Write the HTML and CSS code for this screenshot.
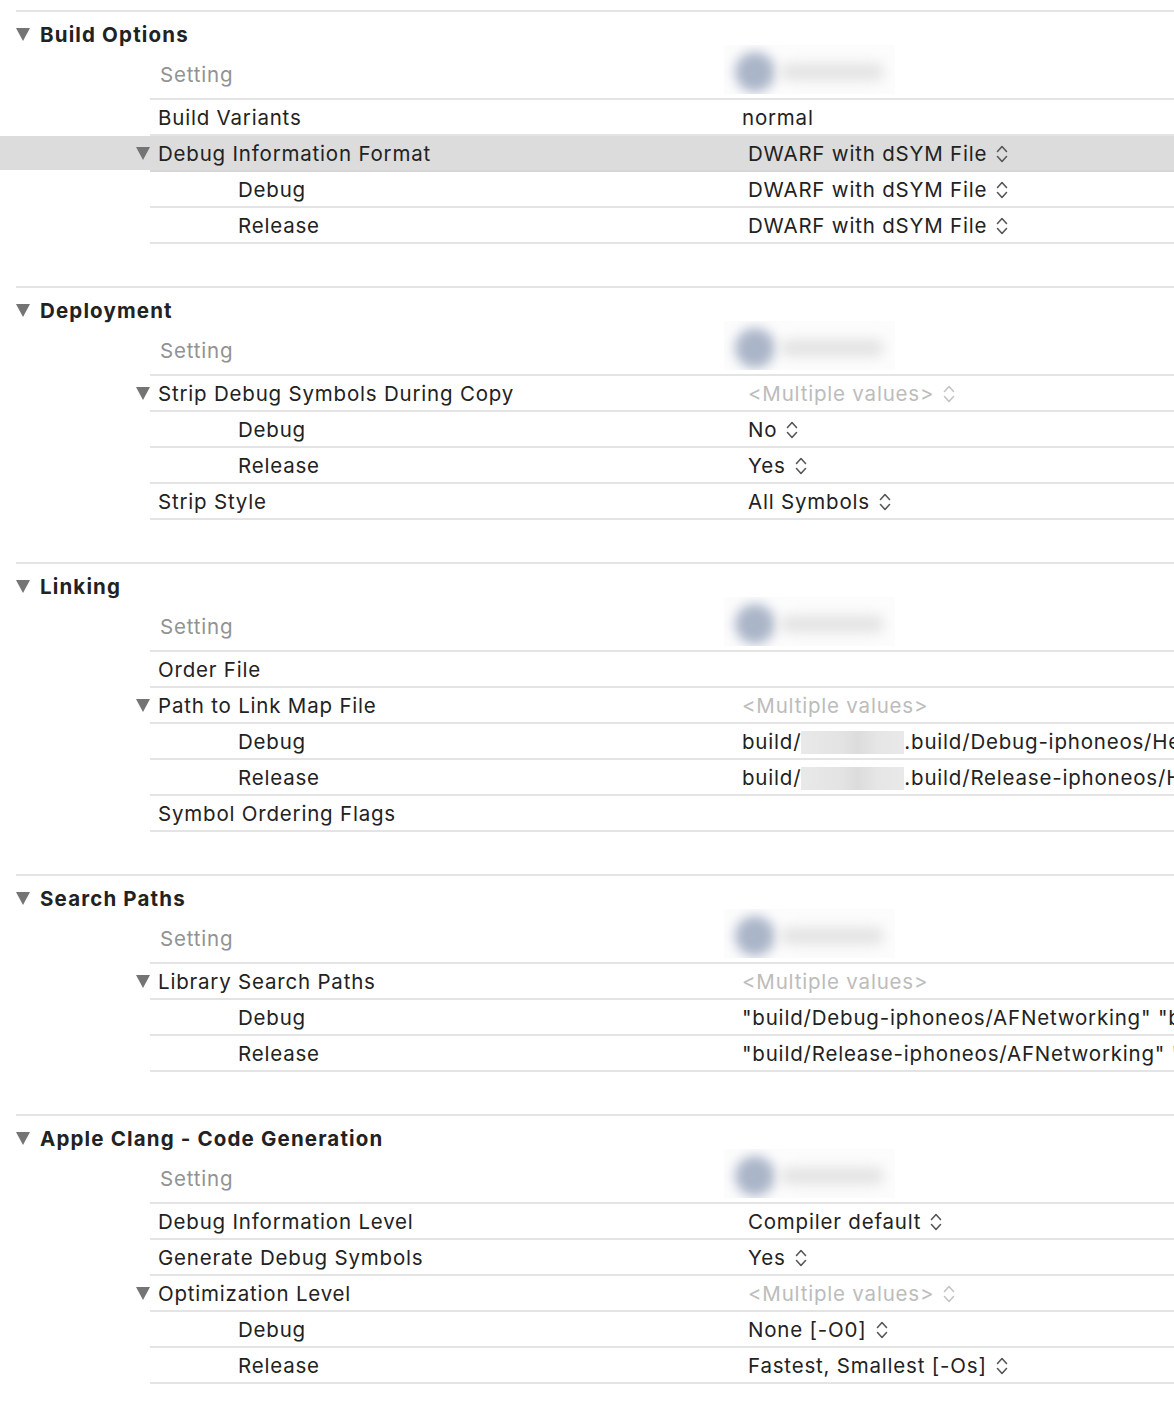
FILE: index.html
```html
<!DOCTYPE html>
<html>
<head>
<meta charset="utf-8">
<link rel="stylesheet" href="styles.css">
</head>
<body>
<div class="editor">

  <section class="group">
    <div class="group-head"><span class="disc"></span><span>Build Options</span></div>
    <div class="colhead"><span class="gutter"></span><span class="name">Setting</span><span class="val"><span class="avatar"><span class="blob-c"></span><span class="blob-b"></span></span></span></div>
    <div class="row"><span class="gutter"></span><span class="name">Build Variants</span><span class="val">normal</span></div>
    <div class="row selected"><span class="gutter"><span class="disc"></span></span><span class="name">Debug Information Format</span><span class="val popup">DWARF with dSYM File<svg class="stepper" viewBox="0 0 12 20"><path d="M1.5 7.5 L6 2.5 L10.5 7.5 M1.5 12.5 L6 17.5 L10.5 12.5"/></svg></span></div>
    <div class="row"><span class="gutter"></span><span class="name sub">Debug</span><span class="val popup">DWARF with dSYM File<svg class="stepper" viewBox="0 0 12 20"><path d="M1.5 7.5 L6 2.5 L10.5 7.5 M1.5 12.5 L6 17.5 L10.5 12.5"/></svg></span></div>
    <div class="row"><span class="gutter"></span><span class="name sub">Release</span><span class="val popup">DWARF with dSYM File<svg class="stepper" viewBox="0 0 12 20"><path d="M1.5 7.5 L6 2.5 L10.5 7.5 M1.5 12.5 L6 17.5 L10.5 12.5"/></svg></span></div>
  </section>

  <section class="group">
    <div class="group-head"><span class="disc"></span><span>Deployment</span></div>
    <div class="colhead"><span class="gutter"></span><span class="name">Setting</span><span class="val"><span class="avatar"><span class="blob-c"></span><span class="blob-b"></span></span></span></div>
    <div class="row"><span class="gutter"><span class="disc"></span></span><span class="name">Strip Debug Symbols During Copy</span><span class="val popup multi">&lt;Multiple values&gt;<svg class="stepper" viewBox="0 0 12 20"><path d="M1.5 7.5 L6 2.5 L10.5 7.5 M1.5 12.5 L6 17.5 L10.5 12.5"/></svg></span></div>
    <div class="row"><span class="gutter"></span><span class="name sub">Debug</span><span class="val popup">No<svg class="stepper" viewBox="0 0 12 20"><path d="M1.5 7.5 L6 2.5 L10.5 7.5 M1.5 12.5 L6 17.5 L10.5 12.5"/></svg></span></div>
    <div class="row"><span class="gutter"></span><span class="name sub">Release</span><span class="val popup">Yes<svg class="stepper" viewBox="0 0 12 20"><path d="M1.5 7.5 L6 2.5 L10.5 7.5 M1.5 12.5 L6 17.5 L10.5 12.5"/></svg></span></div>
    <div class="row"><span class="gutter"></span><span class="name">Strip Style</span><span class="val popup">All Symbols<svg class="stepper" viewBox="0 0 12 20"><path d="M1.5 7.5 L6 2.5 L10.5 7.5 M1.5 12.5 L6 17.5 L10.5 12.5"/></svg></span></div>
  </section>

  <section class="group">
    <div class="group-head"><span class="disc"></span><span>Linking</span></div>
    <div class="colhead"><span class="gutter"></span><span class="name">Setting</span><span class="val"><span class="avatar"><span class="blob-c"></span><span class="blob-b"></span></span></span></div>
    <div class="row"><span class="gutter"></span><span class="name">Order File</span><span class="val"></span></div>
    <div class="row"><span class="gutter"><span class="disc"></span></span><span class="name">Path to Link Map File</span><span class="val multi">&lt;Multiple values&gt;</span></div>
    <div class="row"><span class="gutter"></span><span class="name sub">Debug</span><span class="val">build/<span class="redact"></span>.build/Debug-iphoneos/HelloWorld-LinkMap.txt</span></div>
    <div class="row"><span class="gutter"></span><span class="name sub">Release</span><span class="val">build/<span class="redact"></span>.build/Release-iphoneos/HelloWorld-LinkMap.txt</span></div>
    <div class="row"><span class="gutter"></span><span class="name">Symbol Ordering Flags</span><span class="val"></span></div>
  </section>

  <section class="group">
    <div class="group-head"><span class="disc"></span><span>Search Paths</span></div>
    <div class="colhead"><span class="gutter"></span><span class="name">Setting</span><span class="val"><span class="avatar"><span class="blob-c"></span><span class="blob-b"></span></span></span></div>
    <div class="row"><span class="gutter"><span class="disc"></span></span><span class="name">Library Search Paths</span><span class="val multi">&lt;Multiple values&gt;</span></div>
    <div class="row"><span class="gutter"></span><span class="name sub">Debug</span><span class="val">"build/Debug-iphoneos/AFNetworking" "build/Debug-iphoneos/Masonry"</span></div>
    <div class="row"><span class="gutter"></span><span class="name sub">Release</span><span class="val">"build/Release-iphoneos/AFNetworking"  "build/Release-iphoneos/Masonry"</span></div>
  </section>

  <section class="group">
    <div class="group-head"><span class="disc"></span><span>Apple Clang - Code Generation</span></div>
    <div class="colhead"><span class="gutter"></span><span class="name">Setting</span><span class="val"><span class="avatar"><span class="blob-c"></span><span class="blob-b"></span></span></span></div>
    <div class="row"><span class="gutter"></span><span class="name">Debug Information Level</span><span class="val popup">Compiler default<svg class="stepper" viewBox="0 0 12 20"><path d="M1.5 7.5 L6 2.5 L10.5 7.5 M1.5 12.5 L6 17.5 L10.5 12.5"/></svg></span></div>
    <div class="row"><span class="gutter"></span><span class="name">Generate Debug Symbols</span><span class="val popup">Yes<svg class="stepper" viewBox="0 0 12 20"><path d="M1.5 7.5 L6 2.5 L10.5 7.5 M1.5 12.5 L6 17.5 L10.5 12.5"/></svg></span></div>
    <div class="row"><span class="gutter"><span class="disc"></span></span><span class="name">Optimization Level</span><span class="val popup multi">&lt;Multiple values&gt;<svg class="stepper" viewBox="0 0 12 20"><path d="M1.5 7.5 L6 2.5 L10.5 7.5 M1.5 12.5 L6 17.5 L10.5 12.5"/></svg></span></div>
    <div class="row"><span class="gutter"></span><span class="name sub">Debug</span><span class="val popup">None [-O0]<svg class="stepper" viewBox="0 0 12 20"><path d="M1.5 7.5 L6 2.5 L10.5 7.5 M1.5 12.5 L6 17.5 L10.5 12.5"/></svg></span></div>
    <div class="row"><span class="gutter"></span><span class="name sub">Release</span><span class="val popup">Fastest, Smallest [-Os]<svg class="stepper" viewBox="0 0 12 20"><path d="M1.5 7.5 L6 2.5 L10.5 7.5 M1.5 12.5 L6 17.5 L10.5 12.5"/></svg></span></div>
  </section>

</div>
</body>
</html>
```

FILE: styles.css
```css
html, body {
  margin: 0;
  padding: 0;
  background: #ffffff;
}

body {
  font-family: Inter, "Liberation Sans", sans-serif;
  font-size: 20.5px;
  letter-spacing: 0.8px;
  color: #222222;
  overflow: hidden;
}

.editor {
  padding-top: 10px;
  width: 1174px;
}

.group {
  margin-bottom: 42px;
}

.group-head {
  margin-left: 16px;
  border-top: 2px solid #e4e4e4;
  height: 44px;
  display: flex;
  align-items: center;
  gap: 10px;
  font-weight: 700;
  letter-spacing: 1.15px;
  color: #222222;
}

.disc {
  display: inline-block;
  width: 0;
  height: 0;
  border-left: 7px solid transparent;
  border-right: 7px solid transparent;
  border-top: 13px solid #747474;
}

.colhead,
.row {
  display: grid;
  grid-template-columns: 150px 592px 1fr;
}

.gutter {
  display: flex;
  align-items: center;
  justify-content: flex-end;
}

.colhead .name,
.colhead .val {
  height: 35px;
  line-height: 36px;
  padding-top: 1px;
  padding-bottom: 6px;
  border-bottom: 2px solid #e4e4e4;
}

.colhead .name {
  padding-left: 10px;
  color: #929292;
}

.colhead .val {
  position: relative;
}

.avatar {
  position: absolute;
  left: -18px;
  top: -11px;
  width: 171px;
  height: 49px;
  background: #fcfcfd;
  overflow: hidden;
}

.blob-c {
  position: absolute;
  left: 11px;
  top: 7px;
  width: 40px;
  height: 40px;
  border-radius: 50%;
  background: #aab5c8;
  filter: blur(6px);
}

.blob-b {
  position: absolute;
  left: 56px;
  top: 18px;
  width: 104px;
  height: 18px;
  border-radius: 9px;
  background: #e4e4e4;
  filter: blur(6px);
}

.row .name,
.row .val {
  height: 33px;
  line-height: 34px;
  padding-top: 1px;
  border-bottom: 2px solid #e4e4e4;
  white-space: nowrap;
  overflow: hidden;
}

.row .name {
  padding-left: 8px;
}

.row .name.sub {
  padding-left: 88px;
}

.row .gutter {
  height: 34px;
  border-bottom: 2px solid transparent;
}

.row.selected .gutter,
.row.selected .name,
.row.selected .val {
  background: #dcdcdc;
}

.row.selected .gutter {
  border-bottom-color: #ffffff;
}

.row.selected .name,
.row.selected .val {
  border-bottom-color: #d6d6d6;
}

.val.popup {
  padding-left: 6px;
  display: flex;
  align-items: center;
}

.val.multi {
  color: #bcbcbc;
}

.stepper {
  width: 12px;
  height: 20px;
  margin-left: 9px;
  flex: none;
  fill: none;
  stroke: #585858;
  stroke-width: 1.6;
  stroke-linecap: round;
  stroke-linejoin: round;
}

.multi .stepper {
  stroke: #c4c4c4;
}

.redact {
  display: inline-block;
  width: 103px;
  height: 23px;
  vertical-align: -5px;
  background: linear-gradient(90deg, #e9e9e9 0%, #e3e3e3 40%, #dcdcdc 55%, #e6e6e6 75%, #e9e9e9 100%);
}
```
